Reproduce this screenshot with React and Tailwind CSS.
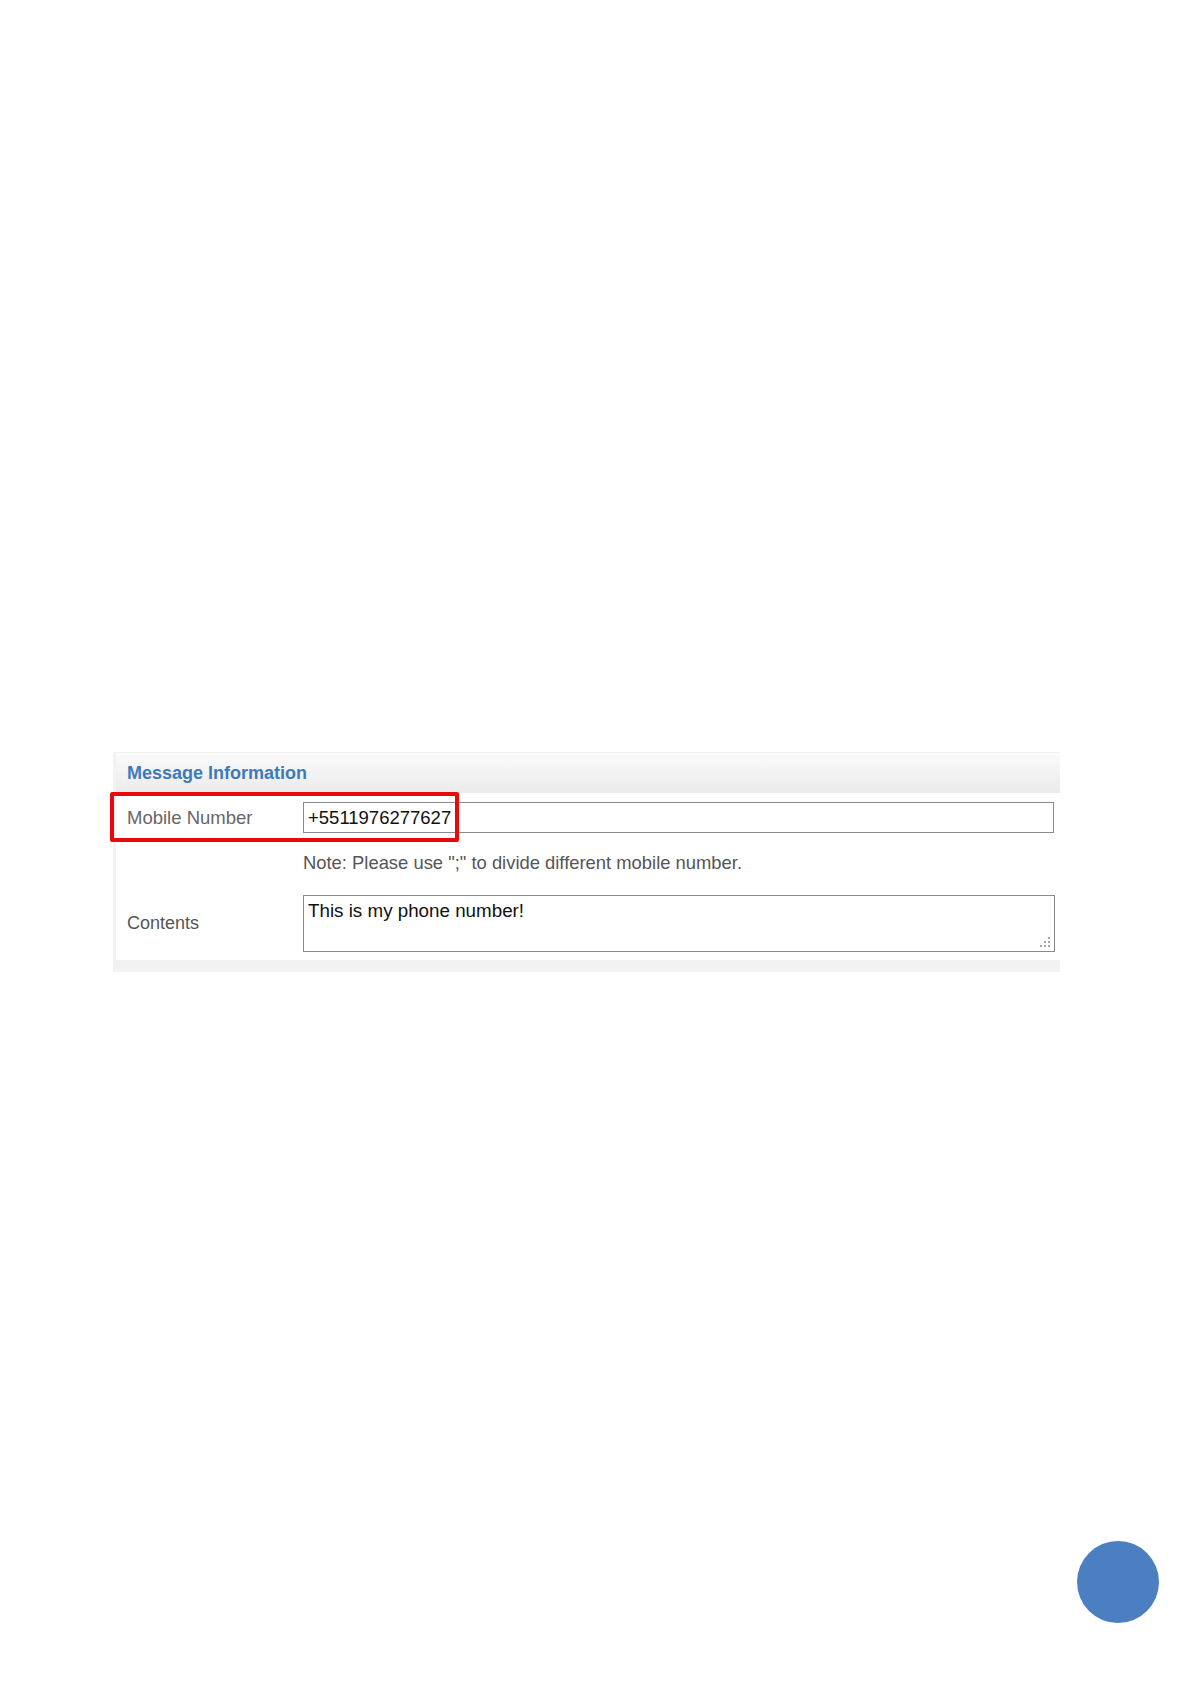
import React from 'react';

const FONT = { fontFamily: '"Liberation Sans", Arial, sans-serif' };

function ResizeGrip() {
  // little dotted corner on the textarea
  const dots = [[9, 1], [9, 5], [5, 5], [9, 9], [5, 9], [1, 9]];
  return (
    <svg width="12" height="12" viewBox="0 0 12 12" className="absolute right-[4px] bottom-[4px]">
      {dots.map(([x, y]) => (
        <rect key={`${x}-${y}`} x={x} y={y} width="2" height="2" fill="#a8a8a8" />
      ))}
    </svg>
  );
}

function MessagePanel() {
  return (
    <div className="w-[947px] bg-[#f2f2f2] pl-[3px] pt-[1px] pb-[12px]">
      <div className="h-[40px] flex items-center pl-[11px] bg-gradient-to-b from-[#fafafa] to-[#ebebeb]">
        <span className="text-[18px] font-bold text-[#3d7abb]">Message Information</span>
      </div>
      <div className="bg-white pt-[9px] pb-[8px]">
        <div className="relative flex items-center h-[31px]">
          <span className="w-[187px] pl-[11px] text-[18.5px] text-[#666]">Mobile Number</span>
          <input
            readOnly
            value="+5511976277627"
            className="w-[751px] h-[31px] border border-[#8a8a8a] px-[4px] text-[18.5px] text-[#111] outline-none"
            style={FONT}
          />
          <div className="absolute left-[-6px] top-[-10px] w-[349px] h-[50px] border-[4px] border-[#e80a0a] rounded-[2px]" />
        </div>
        <div className="pl-[187px] mt-[20px] h-[20px] flex items-center text-[18.4px] text-[#555]">
          Note: Please use ";" to divide different mobile number.
        </div>
        <div className="flex items-center mt-[22px]">
          <span className="w-[187px] pl-[11px] text-[18px] text-[#555]">Contents</span>
          <div className="relative w-[752px] h-[57px]">
            <textarea
              readOnly
              defaultValue="This is my phone number!"
              className="w-full h-full resize-none border border-[#8a8a8a] px-[4px] pt-[4px] text-[18.8px] leading-[22px] text-[#111] outline-none"
              style={FONT}
            />
            <ResizeGrip />
          </div>
        </div>
      </div>
    </div>
  );
}

export default function App() {
  return (
    <div className="relative w-[1191px] h-[1684px] bg-white overflow-hidden" style={FONT}>
      <div className="pt-[752px] pl-[113px]">
        <MessagePanel />
      </div>
      <div className="absolute left-[1077px] top-[1541px] w-[82px] h-[82px] rounded-full bg-[#4b7fc2]" />
    </div>
  );
}
